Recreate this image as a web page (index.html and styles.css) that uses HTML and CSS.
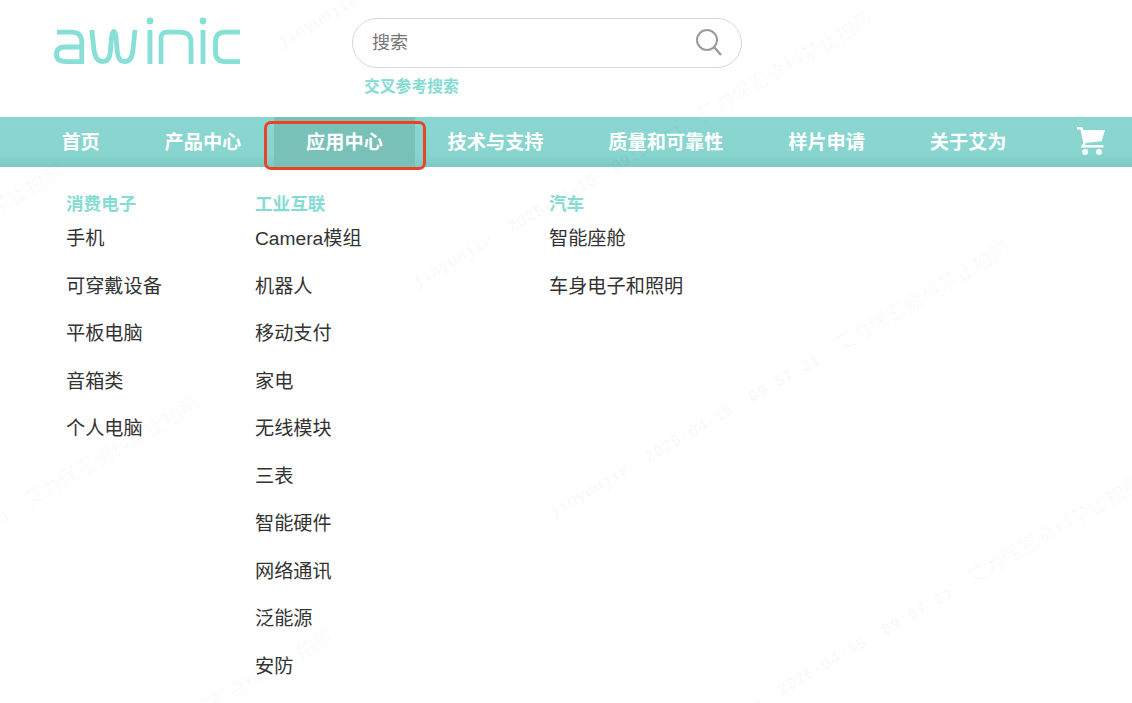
FILE: index.html
```html
<!DOCTYPE html>
<html lang="zh-CN">
<head>
<meta charset="utf-8">
<title>awinic</title>
<link rel="stylesheet" href="styles.css">
</head>
<body>
<div class="page">
  <header class="header">
    <a class="logo" href="#" aria-label="awinic">
      <svg width="200" height="60" viewBox="45 10 200 60" fill="none" stroke="#86e0d6" stroke-width="4.8">
        <path d="M57 32.2H71.5Q81.7 32.2 81.7 42V61.6H66Q56.4 61.6 56.4 54.3Q56.4 47 66 47H81.7"/>
        <path d="M91.8 30L94 50Q95.5 61.6 103 61.6Q109.5 61.6 110.3 52L111.6 37Q112.3 31.5 113.8 31.5Q115.3 31.5 116 37L117.3 52Q118.2 61.6 124.5 61.6Q132 61.6 133 50L135 30"/>
        <path d="M150 30V64M203 30V64"/>
        <circle cx="150" cy="21" r="3.4" fill="#86e0d6" stroke="none"/>
        <circle cx="203" cy="21" r="3.4" fill="#86e0d6" stroke="none"/>
        <path d="M161 64V38Q161 32.2 167 32.2H180Q191 32.2 191 42V64"/>
        <path d="M240 32.2H225Q215.5 32.2 215.5 42V52Q215.5 61.6 225 61.6H240"/>
      </svg>
    </a>
    <div class="search-area">
      <div class="search-box">
        <span class="search-placeholder">搜索</span>
        <svg class="search-icon" width="28" height="30" viewBox="0 0 28 30" fill="none" stroke="#9b9b9b">
          <circle cx="12" cy="12" r="10" stroke-width="2"/>
          <path d="M19.5 19.5L26 27" stroke-width="2.4"/>
        </svg>
      </div>
      <a class="cross-search" href="#">交叉参考搜索</a>
    </div>
  </header>

  <nav class="nav">
    <a class="nav-item" href="#">首页</a>
    <a class="nav-item" href="#">产品中心</a>
    <a class="nav-item is-active" href="#">应用中心<span class="annotation"></span></a>
    <a class="nav-item" href="#">技术与支持</a>
    <a class="nav-item" href="#">质量和可靠性</a>
    <a class="nav-item" href="#">样片申请</a>
    <a class="nav-item" href="#">关于艾为</a>
    <a class="cart" href="#" aria-label="购物车">
      <svg width="30" height="30" viewBox="0 0 30 30" fill="#fff">
        <path d="M1 1H6.2L7.4 4H29L25.6 15.2L9.6 17L8.4 19H27.5V21.6H4.6L7.3 16.6L4.4 3.6H1Z"/>
        <circle cx="9.2" cy="26" r="3"/>
        <circle cx="23" cy="26" r="3"/>
      </svg>
    </a>
  </nav>

  <main class="menu">
    <section class="menu-col">
      <h2 class="menu-title">消费电子</h2>
      <a class="menu-link" href="#">手机</a>
      <a class="menu-link" href="#">可穿戴设备</a>
      <a class="menu-link" href="#">平板电脑</a>
      <a class="menu-link" href="#">音箱类</a>
      <a class="menu-link" href="#">个人电脑</a>
    </section>
    <section class="menu-col">
      <h2 class="menu-title">工业互联</h2>
      <a class="menu-link" href="#">Camera模组</a>
      <a class="menu-link" href="#">机器人</a>
      <a class="menu-link" href="#">移动支付</a>
      <a class="menu-link" href="#">家电</a>
      <a class="menu-link" href="#">无线模块</a>
      <a class="menu-link" href="#">三表</a>
      <a class="menu-link" href="#">智能硬件</a>
      <a class="menu-link" href="#">网络通讯</a>
      <a class="menu-link" href="#">泛能源</a>
      <a class="menu-link" href="#">安防</a>
    </section>
    <section class="menu-col">
      <h2 class="menu-title">汽车</h2>
      <a class="menu-link" href="#">智能座舱</a>
      <a class="menu-link" href="#">车身电子和照明</a>
    </section>
  </main>

  <div class="watermarks" aria-hidden="true">
    <div class="wm wm-1">jinyunjie  2025-04-15  09:57:31  <span class="wm-cn">艾为保密资料禁止拍照</span></div>
    <div class="wm wm-2">jinyunjie  2025-04-15  09:57:31  <span class="wm-cn">艾为保密资料禁止拍照</span></div>
    <div class="wm wm-3">jinyunjie  2025-04-15  09:57:31  <span class="wm-cn">艾为保密资料禁止拍照</span></div>
    <div class="wm wm-4">jinyunjie  2025-04-15  09:57:31  <span class="wm-cn">艾为保密资料禁止拍照</span></div>
    <div class="wm wm-5">jinyunjie  2025-04-15  09:57:31  <span class="wm-cn">艾为保密资料禁止拍照</span></div>
    <div class="wm wm-6">jinyunjie  2025-04-15  09:57:31  <span class="wm-cn">艾为保密资料禁止拍照</span></div>
    <div class="wm wm-7">jinyunjie  2025-04-15  09:57:31  <span class="wm-cn">艾为保密资料禁止拍照</span></div>
  </div>
</div>
</body>
</html>
```

FILE: styles.css
```css
* {
  box-sizing: border-box;
}

html,
body {
  margin: 0;
  height: 100%;
  overflow: hidden;
  background: #fff;
}

body {
  font-family: "Liberation Sans", "Noto Sans CJK SC", sans-serif;
  color: #333;
}

a {
  text-decoration: none;
  color: inherit;
}

.page {
  position: relative;
  height: 703px;
  overflow: hidden;
}

.header {
  display: flex;
  height: 117px;
}

.logo {
  display: block;
  width: 352px;
  padding: 10px 0 0 45px;
}

.logo svg {
  display: block;
}

.search-area {
  width: 390px;
  padding-top: 18px;
}

.search-box {
  display: flex;
  align-items: center;
  justify-content: space-between;
  height: 50px;
  padding: 0 18px 4px 19px;
  border: 1px solid #d6d6d6;
  border-radius: 25px;
}

.search-placeholder {
  font-size: 18px;
  color: #757575;
}

.search-icon {
  display: block;
  margin-top: 3px;
}

.cross-search {
  display: block;
  margin: 8px 0 0 12px;
  font-size: 15.8px;
  line-height: 22px;
  font-weight: 700;
  color: #84dcd3;
}

.nav {
  display: flex;
  align-items: stretch;
  height: 50px;
  padding-left: 29px;
  background: linear-gradient(180deg, #89d7d0 0%, #87d5ce 75%, #7ccac2 100%);
}

.nav-item {
  position: relative;
  display: flex;
  align-items: center;
  padding: 0 32.4px 2px;
  font-size: 19.2px;
  font-weight: 700;
  color: #fff;
}

.nav-item.is-active {
  background: linear-gradient(180deg, #79c2b9 0%, #78c0b8 100%);
}

.annotation {
  position: absolute;
  left: -10px;
  top: 4px;
  width: 162px;
  height: 49px;
  border: 3px solid #ea4328;
  border-radius: 7px;
}

.cart {
  display: block;
  margin-left: 37px;
  padding-top: 9px;
}

.cart svg {
  display: block;
}

.menu {
  display: grid;
  grid-template-columns: 189px 294px 1fr;
  padding: 25px 0 0 66px;
}

.menu-col {
  display: flex;
  flex-direction: column;
}

.menu-title {
  margin: 0;
  font-size: 17.6px;
  line-height: 24px;
  font-weight: 700;
  color: #84dcd3;
}

.menu-link {
  display: block;
  font-size: 19.2px;
  line-height: 47.5px;
  color: #333;
}

.menu-title + .menu-link {
  margin-top: -0.7px;
}

.watermarks {
  position: absolute;
  inset: 0;
  pointer-events: none;
}

.wm {
  position: absolute;
  font-family: "Liberation Mono", monospace;
  font-size: 16.67px;
  line-height: 20px;
  font-weight: 700;
  white-space: pre;
  color: rgba(0, 0, 0, 0.03);
  transform: rotate(-30deg);
  transform-origin: 0 100%;
}

.wm-cn {
  font-family: "Noto Sans CJK SC", sans-serif;
  font-size: 20px;
  font-weight: 400;
  color: rgba(0, 0, 0, 0.033);
}

.wm-1 { left: 284px; top: 29px; }
.wm-2 { left: 419px; top: 269px; }
.wm-3 { left: 556px; top: 499px; }
.wm-4 { left: 689px; top: 732px; }
.wm-5 { left: -391px; top: 422px; }
.wm-6 { left: -254px; top: 654px; }
.wm-7 { left: -121px; top: 887px; }
```
